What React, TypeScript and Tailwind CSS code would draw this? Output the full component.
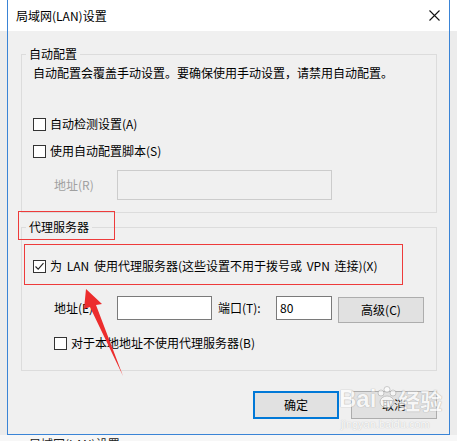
import React from 'react';

const Box: React.FC<{ checked?: boolean }> = ({ checked }) => (
  <span className="w-[13px] h-[13px] shrink-0 border border-[#333] bg-white flex items-center justify-center">
    {checked && (
      <svg width="11" height="11" viewBox="0 0 11 11">
        <path d="M1.5 5.5 L4.2 8.2 L9.5 2.2" fill="none" stroke="#222" strokeWidth="1.1" />
      </svg>
    )}
  </span>
);

const Check: React.FC<{ label: string; checked?: boolean; className?: string }> = ({ label, checked, className }) => (
  <div className={`flex items-center gap-[4px] h-[16px] ${className ?? ''}`}>
    <Box checked={checked} />
    <span className="[word-spacing:2px]">{label}</span>
  </div>
);

const App: React.FC = () => {
  return (
    <div className="relative w-[457px] h-[441px] overflow-hidden bg-[linear-gradient(to_bottom,#ffffff_31px,#ececec_31px)] font-['Noto_Sans_CJK_SC','Noto_Sans',sans-serif] text-[12px] leading-[16px] text-black">
      <div className="ml-[7px] w-[443px] border-x border-b border-[#3a84d6]">
        {/* title bar */}
        <div className="h-[31px] bg-white flex items-center justify-between pl-[8px] pr-[9px]">
          <span>局域网(LAN)设置</span>
          <svg width="11" height="11" viewBox="0 0 11 11">
            <path d="M0.5 0.5 L10.5 10.5 M10.5 0.5 L0.5 10.5" stroke="#111" strokeWidth="1.1" />
          </svg>
        </div>

        <div className="bg-[#f0f0f0] pl-[13px] pr-[12px] pt-[15px] pb-[15px]">
          <fieldset className="border border-[#dcdcdc]">
            <legend className="ml-[4px] px-[3px]">自动配置</legend>
            <div className="pl-[11px] pt-[3px] pb-[12px]">
              <p>自动配置会覆盖手动设置。要确保使用手动设置，请禁用自动配置。</p>
              <Check label="自动检测设置(A)" className="mt-[35px]" />
              <Check label="使用自动配置脚本(S)" className="mt-[11px]" />
              <div className="flex items-center mt-[11px]">
                <span className="ml-[21px] w-[63px] text-[#a0a0a0]">地址(R)</span>
                <div className="w-[215px] h-[30px] border border-[#cccccc] bg-[#f0f0f0]" />
              </div>
            </div>
          </fieldset>

          <fieldset className="border border-[#dcdcdc] mt-[6px]">
            <legend className="ml-[4px] px-[3px]">代理服务器</legend>
            <div className="pl-[11px] pt-[23px] pb-[19px]">
              <Check checked label="为 LAN 使用代理服务器(这些设置不用于拨号或 VPN 连接)(X)" />
              <div className="flex items-start mt-[22px]">
                <span className="ml-[21px] w-[63px] leading-[24px]">地址(E)</span>
                <div className="w-[95px] h-[24px] border border-[#7a7a7a] bg-white" />
                <span className="ml-[6px] w-[58px] leading-[24px]">端口(T):</span>
                <div className="w-[56px] h-[24px] border border-[#7a7a7a] bg-white pl-[3px] leading-[22px]">80</div>
                <button className="ml-[6px] mt-[1px] w-[86px] h-[26px] border border-[#adadad] bg-[#e1e1e1] flex items-center justify-center">
                  高级(C)
                </button>
              </div>
              <Check label="对于本地地址不使用代理服务器(B)" className="ml-[21px] mt-[12px]" />
            </div>
          </fieldset>

          <div className="flex justify-end gap-[12px] mt-[20px]">
            <button className="w-[86px] h-[28px] border-2 border-[#0078d7] bg-[#e1e1e1] flex items-center justify-center">
              确定
            </button>
            <button className="w-[86px] h-[28px] border border-[#adadad] bg-[#e1e1e1] flex items-center justify-center">
              取消
            </button>
          </div>
        </div>
      </div>
      <div className="pl-[29px] pt-[1px] bg-[#f7f7f7] text-[#222]">局域网(LAN)设置</div>

      {/* red annotations */}
      <div className="absolute left-[18px] top-[211px] w-[97px] h-[29px] border border-[#ee3b3b]" />
      <div className="absolute left-[24px] top-[244px] w-[379px] h-[41px] border border-[#ee3b3b]" />
      <svg className="absolute left-0 top-0" width="457" height="441" viewBox="0 0 457 441">
        <polygon points="86,289 102,304 96,305 123,376 90,307 84,309" fill="#ec2d2d" />
      </svg>

      {/* watermark */}
      <div className="absolute left-[339px] top-[386px] flex items-end text-white opacity-70 [text-shadow:0_0_1px_#9a9a9a,0_0_1px_#9a9a9a]">
        <span className="text-[24px] leading-[26px] font-bold font-['Liberation_Sans',sans-serif]">Bai</span>
        <svg width="22" height="24" viewBox="0 0 22 24" className="mb-[2px]">
          <g fill="#ffffff" stroke="#a8a8a8" strokeWidth="0.8">
            <circle cx="5" cy="7" r="3" />
            <circle cx="11" cy="3.5" r="3" />
            <circle cx="17" cy="7" r="3" />
            <ellipse cx="11" cy="16" rx="7" ry="6" />
          </g>
        </svg>
        <span className="text-[22px] leading-[26px] font-bold">经验</span>
      </div>
      <div className="absolute left-[341px] top-[418px] text-[11px] leading-[12px] text-white opacity-70 [text-shadow:0_0_1px_#9a9a9a] font-['Liberation_Sans',sans-serif]">
        jingyan.baidu.com
      </div>
    </div>
  );
};

export default App;
